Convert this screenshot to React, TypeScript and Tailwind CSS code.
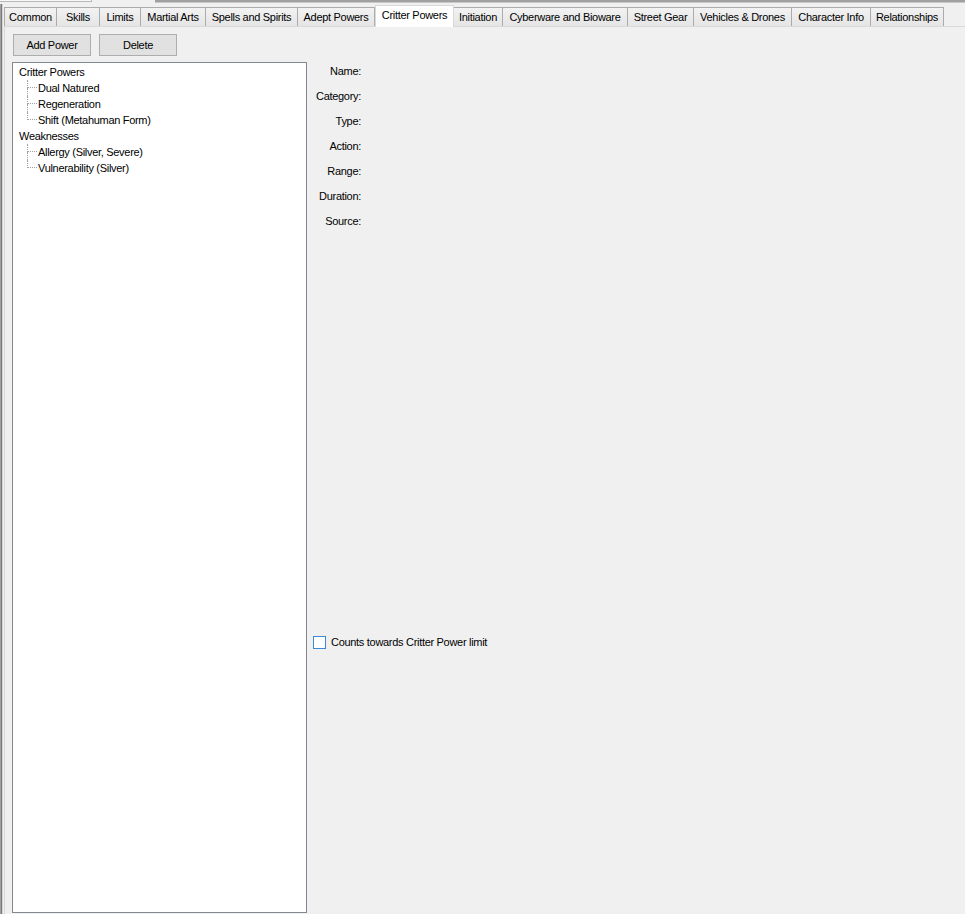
import React from "react";

const tabs: { label: string; w: number; selected?: boolean }[] = [
  { label: "Common", w: 52 },
  { label: "Skills", w: 43 },
  { label: "Limits", w: 41 },
  { label: "Martial Arts", w: 65 },
  { label: "Spells and Spirits", w: 92 },
  { label: "Adept Powers", w: 77 },
  { label: "Critter Powers", w: 79, selected: true },
  { label: "Initiation", w: 49 },
  { label: "Cyberware and Bioware", w: 125 },
  { label: "Street Gear", w: 66 },
  { label: "Vehicles & Drones", w: 98 },
  { label: "Character Info", w: 79 },
  { label: "Relationships", w: 73 },
];

const tree = [
  { label: "Critter Powers", children: ["Dual Natured", "Regeneration", "Shift (Metahuman Form)"] },
  { label: "Weaknesses", children: ["Allergy (Silver, Severe)", "Vulnerability (Silver)"] },
];

const labels = ["Name:", "Category:", "Type:", "Action:", "Range:", "Duration:", "Source:"];

function Connector({ last }: { last: boolean }) {
  return (
    <div className="flex flex-col w-[10px] h-[16px] ml-[14px] mr-[1px] shrink-0">
      <div className="h-[8px] border-l border-b border-dotted border-[#a0a0a0]" />
      <div className={last ? "h-[8px]" : "h-[8px] border-l border-dotted border-[#a0a0a0]"} />
    </div>
  );
}

export default function App() {
  return (
    <div
      className="w-[965px] h-[914px] bg-[#f0f0f0] flex flex-col overflow-hidden text-[11px] tracking-[-0.3px] text-black"
      style={{ fontFamily: '"Liberation Sans", Arial, sans-serif' }}
    >
      {/* top strip */}
      <div className="h-[4px] flex shrink-0">
        <div className="w-[92px] h-[2px] bg-[#f7f7f7] border-b border-r border-[#b8b8b8]" />
        <div className="w-[63px]" />
        <div className="flex-1 flex flex-col">
          <div className="h-[2px] bg-[#a0a0a0]" />
          <div className="h-[1px] bg-[#c8c8c8]" />
        </div>
      </div>
      <div className="flex flex-1 min-h-0">
        {/* left edge */}
        <div className="w-[4px] flex shrink-0">
          <div className="w-[1px] bg-[#a0a0a0]" />
          <div className="w-[1px] bg-[#7a7a7a]" />
          <div className="w-[1px] bg-[#d4d4d4]" />
          <div className="w-[1px] bg-[#f0f0f0]" />
        </div>
        <div className="flex-1 flex flex-col min-w-0">
          {/* tab row */}
          <div className="h-[22px] flex items-end shrink-0">
            {tabs.map((t) =>
              t.selected ? (
                <div
                  key={t.label}
                  className="relative z-10 h-[22px] -mb-[1px] bg-white border border-b-0 border-[#d9d9d9] flex items-start justify-center pt-[1px] shrink-0"
                  style={{ width: t.w }}
                >
                  {t.label}
                </div>
              ) : (
                <div
                  key={t.label}
                  className="h-[19px] bg-gradient-to-b from-[#f2f2f2] to-[#e5e5e5] border border-b-0 border-[#acacac] -ml-[1px] first:ml-0 flex items-center justify-center shrink-0"
                  style={{ width: t.w + 1 }}
                >
                  {t.label}
                </div>
              )
            )}
          </div>
          {/* panel */}
          <div className="flex-1 flex flex-col border-t border-l border-[#d9d9d9] min-h-0">
            <div className="flex gap-[8px] pl-[8px] pt-[7px] shrink-0">
              <button className="w-[78px] h-[22px] bg-[#e1e1e1] border border-[#adadad] flex items-center justify-center">
                Add Power
              </button>
              <button className="w-[78px] h-[22px] bg-[#e1e1e1] border border-[#adadad] flex items-center justify-center">
                Delete
              </button>
            </div>
            <div className="flex flex-1 pl-[7px] pt-[6px] min-h-0">
              {/* tree */}
              <div className="w-[295px] h-[851px] bg-white border border-[#828790] pt-[1px] shrink-0">
                {tree.map((g) => (
                  <div key={g.label}>
                    <div className="h-[16px] leading-[16px] pl-[6px]">{g.label}</div>
                    {g.children.map((c, i) => (
                      <div key={c} className="flex h-[16px] items-center">
                        <Connector last={i === g.children.length - 1} />
                        <span className="leading-[16px]">{c}</span>
                      </div>
                    ))}
                  </div>
                ))}
              </div>
              {/* details */}
              <div className="flex flex-col">
                <div className="flex flex-col">
                  {labels.map((l) => (
                    <div key={l} className="w-[54px] h-[25px] text-right pt-[3px] leading-[13px]">
                      {l}
                    </div>
                  ))}
                </div>
                <div className="flex items-center gap-[5px] ml-[6px] mt-[397px]">
                  <div className="w-[13px] h-[13px] bg-white border border-[#3c8ad6]" />
                  <span>Counts towards Critter Power limit</span>
                </div>
              </div>
            </div>
          </div>
        </div>
      </div>
    </div>
  );
}
